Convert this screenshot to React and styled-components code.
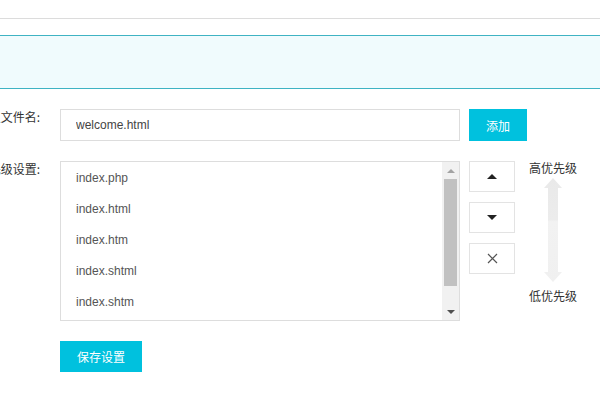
import React from 'react';
import styled, { createGlobalStyle } from 'styled-components';

const GlobalStyle = createGlobalStyle`
  body {
    margin: 0;
    background: #fff;
    font-family: "Liberation Sans", Arial, "Noto Sans CJK SC", sans-serif;
    font-size: 12px;
    color: #333;
    overflow: hidden;
  }
`;

const Page = styled.div`
  width: 600px;
  height: 400px;
  overflow: hidden;
`;

const TopBar = styled.div`
  height: 18px;
  border-bottom: 1px solid #dcdcdc;
`;

const Notice = styled.div`
  margin-top: 16px;
  height: 52px;
  background: #f0fbfd;
  border-top: 1px solid #3fb3c3;
  border-bottom: 1px solid #3fb3c3;
`;

const Form = styled.div`
  margin-left: -60px;
  padding-top: 20px;
`;

const Row = styled.div`
  display: flex;
  align-items: flex-start;
  margin-top: ${({ $top }) => $top || 0}px;
`;

const Label = styled.div`
  width: 100px;
  margin-right: 20px;
  text-align: right;
  line-height: 16px;
  white-space: nowrap;
  color: #333;
  font-family: "Noto Sans CJK SC", sans-serif;
`;

const TextInput = styled.input`
  box-sizing: border-box;
  width: 400px;
  height: 32px;
  border: 1px solid #dddddd;
  padding: 0 15px;
  font-family: "Liberation Sans", Arial, sans-serif;
  font-size: 12px;
  color: #444;
  outline: none;
`;

const PrimaryButton = styled.button`
  box-sizing: border-box;
  width: ${({ $w }) => $w}px;
  height: ${({ $h }) => $h}px;
  margin-left: ${({ $ml }) => $ml || 0}px;
  border: none;
  background: #00c1de;
  color: #fff;
  font-family: "Noto Sans CJK SC", sans-serif;
  font-size: 12px;
  padding: 0;
  cursor: pointer;
`;

const ListBox = styled.div`
  box-sizing: border-box;
  width: 400px;
  height: 160px;
  border: 1px solid #dddddd;
  display: flex;
`;

const List = styled.ul`
  flex: 1;
  margin: 0;
  padding: 1px 0 0;
  list-style: none;
  overflow: hidden;
`;

const Item = styled.li`
  height: 31px;
  line-height: 31px;
  padding-left: 15px;
  color: #555;
`;

const Scrollbar = styled.div`
  width: 17px;
  display: flex;
  flex-direction: column;
  background: #f1f1f1;
`;

const ScrollArrow = styled.div`
  height: 17px;
  display: flex;
  align-items: center;
  justify-content: center;
  &::after {
    content: '';
    border-left: 4px solid transparent;
    border-right: 4px solid transparent;
    ${({ $down, $color }) =>
      $down
        ? `border-top: 4px solid ${$color};`
        : `border-bottom: 4px solid ${$color};`}
  }
`;

const Track = styled.div`
  flex: 1;
`;

const Thumb = styled.div`
  height: 107px;
  margin: 0 2px;
  background: #c1c1c1;
`;

const ButtonColumn = styled.div`
  display: flex;
  flex-direction: column;
  gap: 10px;
  margin-left: 9px;
`;

const IconButton = styled.button`
  box-sizing: border-box;
  width: 46px;
  height: 31px;
  background: #fff;
  border: 1px solid #e3e3e3;
  display: flex;
  align-items: center;
  justify-content: center;
  padding: 0;
  color: #333;
  cursor: pointer;
`;

const Triangle = styled.span`
  width: 0;
  height: 0;
  border-left: 5px solid transparent;
  border-right: 5px solid transparent;
  ${({ $down }) =>
    $down ? 'border-top: 5px solid #222;' : 'border-bottom: 5px solid #222;'}
`;

const PriorityColumn = styled.div`
  width: 50px;
  margin-left: 13px;
  display: flex;
  flex-direction: column;
  align-items: center;
  font-family: "Noto Sans CJK SC", sans-serif;
  color: #333;
`;

const PriorityText = styled.div`
  line-height: 14px;
  white-space: nowrap;
  margin-top: ${({ $top }) => $top || 0}px;
`;

const ArrowWrap = styled.div`
  margin-top: 3px;
  height: 104px;
  display: flex;
`;

const items = ['index.php', 'index.html', 'index.htm', 'index.shtml', 'index.shtm'];

export default function App() {
  return (
    <Page>
      <GlobalStyle />
      <TopBar />
      <Notice />
      <Form>
        <Row>
          <Label>默认文件名:</Label>
          <TextInput defaultValue="welcome.html" />
          <PrimaryButton $w={58} $h={32} $ml={9}>添加</PrimaryButton>
        </Row>
        <Row $top={20}>
          <Label>优先级设置:</Label>
          <ListBox>
            <List>
              {items.map((name) => (
                <Item key={name}>{name}</Item>
              ))}
            </List>
            <Scrollbar>
              <ScrollArrow $color="#a3a3a3" />
              <Track>
                <Thumb />
              </Track>
              <ScrollArrow $down $color="#505050" />
            </Scrollbar>
          </ListBox>
          <ButtonColumn>
            <IconButton aria-label="上移">
              <Triangle />
            </IconButton>
            <IconButton aria-label="下移">
              <Triangle $down />
            </IconButton>
            <IconButton aria-label="删除">
              <svg width="11" height="11" viewBox="0 0 11 11">
                <path d="M1 1L10 10M10 1L1 10" stroke="#555" strokeWidth="1.2" />
              </svg>
            </IconButton>
          </ButtonColumn>
          <PriorityColumn>
            <PriorityText>高优先级</PriorityText>
            <ArrowWrap>
              <svg width="20" height="104" viewBox="0 0 20 104">
                <defs>
                  <linearGradient id="shaft" x1="0" y1="0" x2="0" y2="1">
                    <stop offset="0" stopColor="#e9e9e9" />
                    <stop offset="0.4" stopColor="#ececec" />
                    <stop offset="0.42" stopColor="#f2f2f2" />
                    <stop offset="1" stopColor="#f0f0f0" />
                  </linearGradient>
                </defs>
                <polygon
                  points="10,0 19,10 15,10 15,94 19,94 10,104 1,94 5,94 5,10 1,10"
                  fill="url(#shaft)"
                />
              </svg>
            </ArrowWrap>
            <PriorityText $top={7}>低优先级</PriorityText>
          </PriorityColumn>
        </Row>
        <Row $top={20}>
          <PrimaryButton $w={82} $h={31} $ml={120}>保存设置</PrimaryButton>
        </Row>
      </Form>
    </Page>
  );
}
